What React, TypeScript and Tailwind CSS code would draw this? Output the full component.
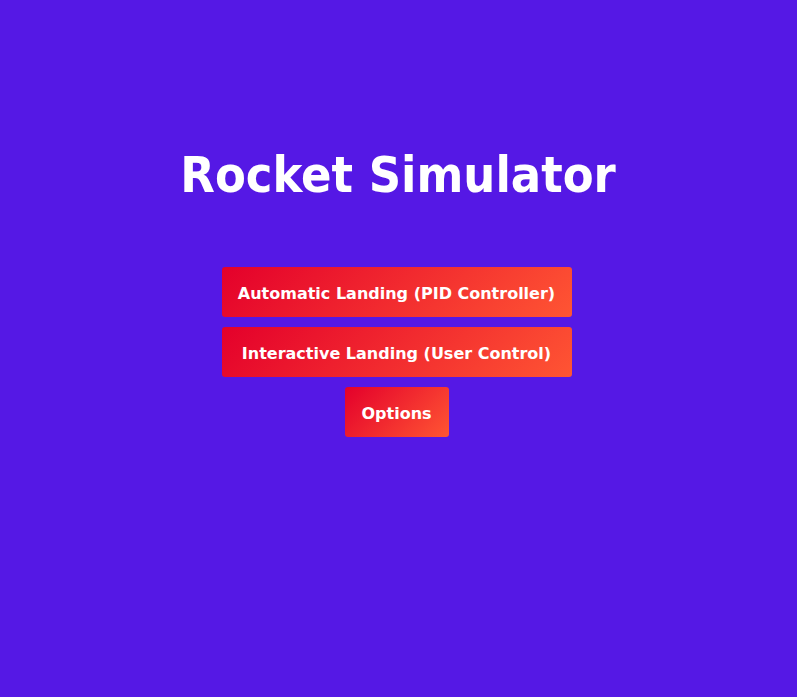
import React from "react";

const buttons = [
  { label: "Automatic Landing (PID Controller)", width: "w-[350px]" },
  { label: "Interactive Landing (User Control)", width: "w-[350px]" },
  { label: "Options", width: "w-[104px]" },
];

const MainMenu: React.FC = () => {
  return (
    <div className="min-h-screen w-full bg-[#5518e5] text-white">
      <div className="flex flex-col items-center pt-[144px] pr-[4px]">
        <h1 className="ml-[3px] text-[50px] leading-[62px] font-bold font-['DejaVu_Sans_Condensed','DejaVu_Sans',sans-serif]">
          Rocket Simulator
        </h1>
        <div className="mt-[61px] flex flex-col items-center gap-[10px]">
          {buttons.map((b) => (
            <button
              key={b.label}
              className={`${b.width} h-[50px] pt-[3px] rounded-[3px] bg-[linear-gradient(135deg,#e4002b,#ff5533)] text-[16px] font-bold text-white font-['DejaVu_Sans',sans-serif] whitespace-nowrap`}
            >
              {b.label}
            </button>
          ))}
        </div>
      </div>
    </div>
  );
};

export default function App() {
  return <MainMenu />;
}
